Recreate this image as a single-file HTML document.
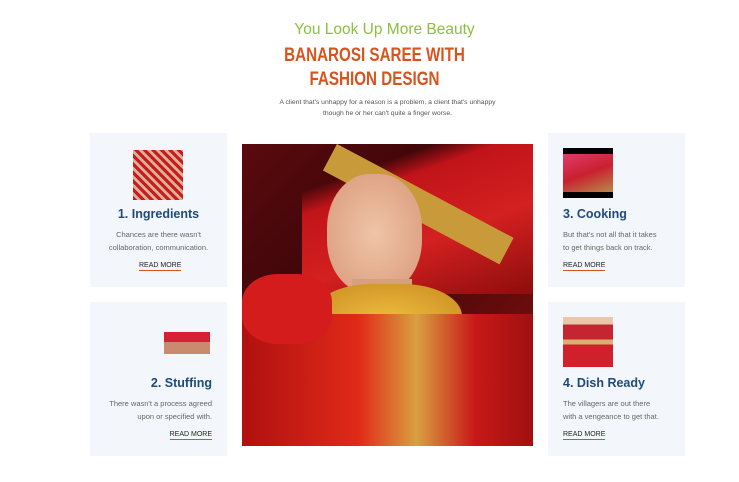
<!DOCTYPE html>
<html><head><style>
*{margin:0;padding:0;box-sizing:border-box}
body{width:739px;height:482px;background:#fff;font-family:"Liberation Sans",sans-serif;position:relative;overflow:hidden}
.a{position:absolute}
.sub{left:15px;width:739px;top:21px;text-align:center;color:#8cbf3f;font-size:15.5px}
.h{left:5px;width:739px;top:44px;text-align:center;color:#d9531e;font-size:19px;font-weight:bold;line-height:24px;transform:scaleX(0.8)}
.p{left:18px;width:739px;top:97px;text-align:center;color:#555;font-size:6.8px;line-height:11px}
.card{background:#f3f6fa;width:137px;height:154px}
.card h3{position:absolute;font-size:12.5px;color:#1f4a7a;font-weight:bold}
.card .t{position:absolute;font-size:7.5px;color:#666;line-height:13px}
.card .r{position:absolute;font-size:7px;color:#222;border-bottom:1.5px solid #d9531e;padding-bottom:1px}
</style></head><body>
<div class="a sub">You Look Up More Beauty</div>
<div class="a h">BANAROSI SAREE WITH<br>FASHION DESIGN</div>
<div class="a p">A client that's unhappy for a reason is a problem, a client that's unhappy<br>though he or her can't quite a finger worse.</div>

<div class="a card" style="left:90px;top:133px">
 <div class="a" style="left:43px;top:17px;width:50px;height:50px;background:repeating-linear-gradient(45deg,#c8192a 0 3px,#d8b48a 3px 6px)"></div>
 <h3 style="left:0;width:137px;text-align:center;top:74px">1. Ingredients</h3>
 <div class="t" style="left:0;width:137px;text-align:center;top:95px">Chances are there wasn't<br>collaboration, communication.</div>
 <div class="r" style="left:49px;top:129px">READ MORE</div>
</div>
<div class="a card" style="left:90px;top:302px">
 <div class="a" style="left:74px;top:30px;width:46px;height:22px;background:linear-gradient(#d81f36 0 45%,#c98a70 45%)"></div>
 <h3 style="right:15px;top:74px">2. Stuffing</h3>
 <div class="t" style="right:15px;text-align:right;top:95px">There wasn't a process agreed<br>upon or specified with.</div>
 <div class="r" style="right:15px;top:129px">READ MORE</div>
</div>
<div class="a card" style="left:548px;top:133px">
 <div class="a" style="left:15px;top:15px;width:50px;height:50px;background:#000"><div class="a" style="left:0;top:6px;width:50px;height:38px;background:linear-gradient(160deg,#e23a6a,#c92030 50%,#b88a4a)"></div></div>
 <h3 style="left:15px;top:74px">3. Cooking</h3>
 <div class="t" style="left:15px;top:95px">But that's not all that it takes<br>to get things back on track.</div>
 <div class="r" style="left:15px;top:129px">READ MORE</div>
</div>
<div class="a card" style="left:548px;top:302px">
 <div class="a" style="left:15px;top:15px;width:50px;height:50px;background:linear-gradient(#e8c8a8 0 15%,#c42530 15% 45%,#d8b070 45% 55%,#d0202c 55%)"></div>
 <h3 style="left:15px;top:74px">4. Dish Ready</h3>
 <div class="t" style="left:15px;top:95px">The villagers are out there<br>with a vengeance to get that.</div>
 <div class="r" style="left:15px;top:129px">READ MORE</div>
</div>

<div class="a" style="left:242px;top:144px;width:291px;height:302px;overflow:hidden;background:linear-gradient(135deg,#5a0a0e,#3a0608 40%,#8a1010)">
 <div class="a" style="left:60px;top:0;width:240px;height:150px;background:linear-gradient(160deg,transparent 20%,#c0141a 30%,#d42020 60%,#8a0c0c);"></div>
 <div class="a" style="left:95px;top:0;width:200px;height:30px;transform:rotate(28deg);transform-origin:0 0;background:#c89a3a"></div>
 <div class="a" style="left:85px;top:30px;width:95px;height:120px;border-radius:45%;background:radial-gradient(#f0c4a8,#d89878)"></div>
 <div class="a" style="left:110px;top:135px;width:60px;height:40px;background:#d4a07e"></div>
 <div class="a" style="left:70px;top:140px;width:150px;height:80px;border-radius:40%;background:radial-gradient(#f0c040,#c88a20)"></div>
 <div class="a" style="left:0;top:170px;width:291px;height:140px;background:linear-gradient(90deg,#b01010,#e02a18 40%,#d8a040 60%,#c81818 80%,#a01010)"></div>
 <div class="a" style="left:0;top:130px;width:90px;height:70px;border-radius:40%;background:#d41c1c"></div>
</div>
</body></html>
